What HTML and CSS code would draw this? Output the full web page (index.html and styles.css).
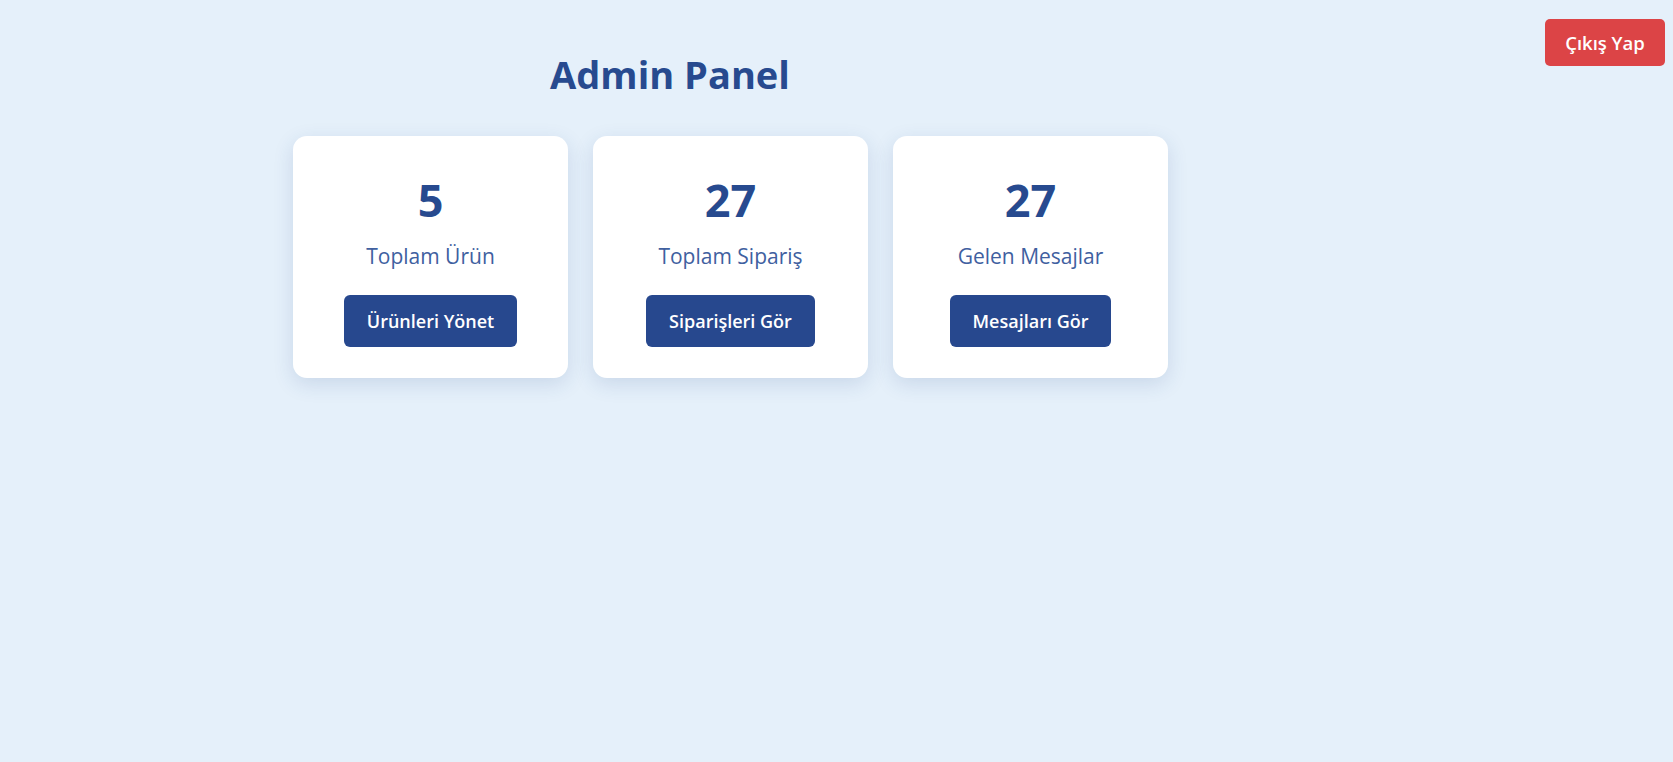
FILE: index.html
```html
<!DOCTYPE html>
<html lang="tr">
<head>
<meta charset="utf-8">
<title>Admin Panel</title>
<link rel="stylesheet" href="styles.css">
</head>
<body>
<button class="logout">Çıkış Yap</button>
<main class="panel">
  <h1 class="title">Admin Panel</h1>
  <div class="cards">
    <div class="card">
      <div class="count">5</div>
      <div class="label">Toplam Ürün</div>
      <a class="action" href="#">Ürünleri Yönet</a>
    </div>
    <div class="card">
      <div class="count">27</div>
      <div class="label">Toplam Sipariş</div>
      <a class="action" href="#">Siparişleri Gör</a>
    </div>
    <div class="card">
      <div class="count">27</div>
      <div class="label">Gelen Mesajlar</div>
      <a class="action" href="#">Mesajları Gör</a>
    </div>
  </div>
</main>
</body>
</html>
```

FILE: styles.css
```css
html, body {
  margin: 0;
  padding: 0;
}
body {
  background: #e5f0fa;
  font-family: "Open Sans", "Noto Sans", sans-serif;
  min-height: 762px;
}
.logout {
  position: absolute;
  top: 19px;
  right: 8px;
  width: 120px;
  height: 47px;
  border: none;
  border-radius: 5px;
  background: #dc4446;
  color: #fff;
  font-family: inherit;
  font-size: 18.5px;
  font-weight: 600;
  cursor: pointer;
}
.panel {
  margin-left: 293px;
  padding-top: 48px;
}
.title {
  width: 754px;
  margin: 0;
  text-align: center;
  color: #274a8f;
  font-size: 38px;
  font-weight: 700;
  line-height: 52px;
}
.cards {
  display: flex;
  gap: 25px;
  margin-top: 36px;
}
.card {
  width: 275px;
  height: 242px;
  box-sizing: border-box;
  background: #fff;
  border-radius: 14px;
  box-shadow: 0 6px 20px rgba(39, 74, 143, 0.15);
  display: flex;
  flex-direction: column;
  align-items: center;
  padding-top: 38px;
}
.count {
  color: #274a8f;
  font-size: 45px;
  font-weight: 700;
  line-height: 52px;
}
.label {
  color: #40609f;
  font-size: 21px;
  font-weight: 500;
  line-height: 29px;
  margin-top: 16px;
}
.action {
  margin-top: 24px;
  display: flex;
  align-items: center;
  justify-content: center;
  height: 52px;
  box-sizing: border-box;
  padding: 0 23px;
  border-radius: 6px;
  background: #27488e;
  color: #fff;
  text-decoration: none;
  font-size: 18px;
  font-weight: 600;
}
```
